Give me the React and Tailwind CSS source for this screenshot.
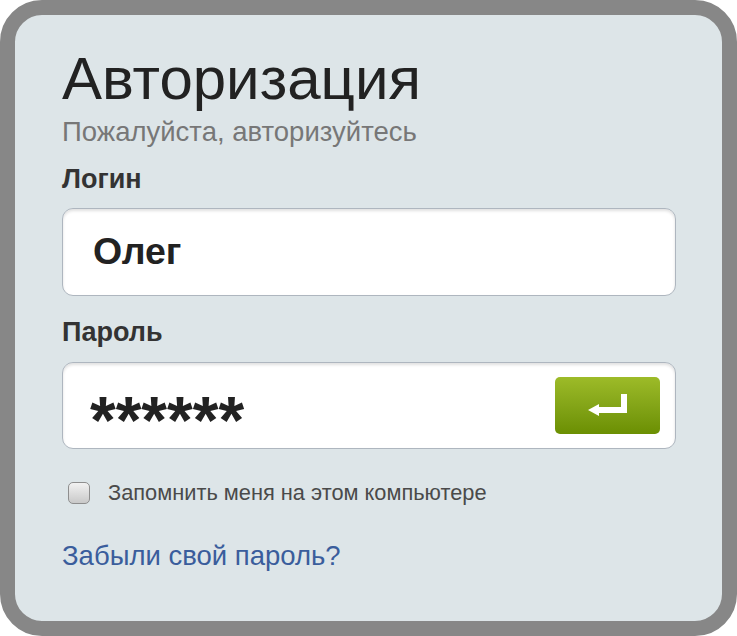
export default function App() {
  return (
    <div className="w-[737px] h-[636px] bg-white" style={{ fontFamily: '"Liberation Sans", Arial, sans-serif' }}>
      <div className="w-full h-full rounded-[42px] border-[15px] border-[#878787] bg-[#dde5e8] pl-[47px] pr-[46px] pt-[34px]">
        <h1 className="text-[60px] leading-none text-[#222] font-normal">Авторизация</h1>
        <p className="mt-[9px] text-[27.5px] leading-none text-[#777]">Пожалуйста, авторизуйтесь</p>

        <label className="block mt-[20px] text-[27px] leading-none font-bold text-[#333]">Логин</label>
        <div className="mt-[15px] h-[88px] rounded-[11px] border border-[#aeb6bf] bg-white shadow-[inset_0_2px_3px_rgba(0,0,0,0.12)] flex items-center pl-[30px]">
          <span className="text-[37.5px] font-bold text-[#222]">Олег</span>
        </div>

        <label className="block mt-[23px] text-[27px] leading-none font-bold text-[#333]">Пароль</label>
        <div className="mt-[16px] h-[87px] rounded-[11px] border border-[#aeb6bf] bg-white shadow-[inset_0_2px_3px_rgba(0,0,0,0.12)] flex items-center pl-[27px] pr-[15px]">
          <span className="flex-1 text-[66px] leading-none font-bold text-[#222] tracking-[0px] translate-y-[15px]">******</span>
          <button className="w-[105px] h-[57px] rounded-[5px] bg-gradient-to-b from-[#9dbb28] to-[#6b8f02] flex items-center justify-center">
            <svg width="42" height="22" viewBox="0 0 42 22">
              <path d="M34 0 H40 V19 H12 V22 L1 16 L12 10 V13 H34 Z" fill="white" />
            </svg>
          </button>
        </div>

        <div className="mt-[28px] flex items-center pl-[6px]">
          <span className="w-[22px] h-[22px] rounded-[5px] border border-[#8e8e8e] bg-gradient-to-b from-[#f2f2f2] to-[#c9c9c9]" />
          <span className="ml-[18px] text-[21.8px] text-[#4a4a4a]">Запомнить меня на этом компьютере</span>
        </div>

        <a className="block mt-[26px] text-[27.5px] text-[#3a5d9c]">Забыли свой пароль?</a>
      </div>
    </div>
  );
}
